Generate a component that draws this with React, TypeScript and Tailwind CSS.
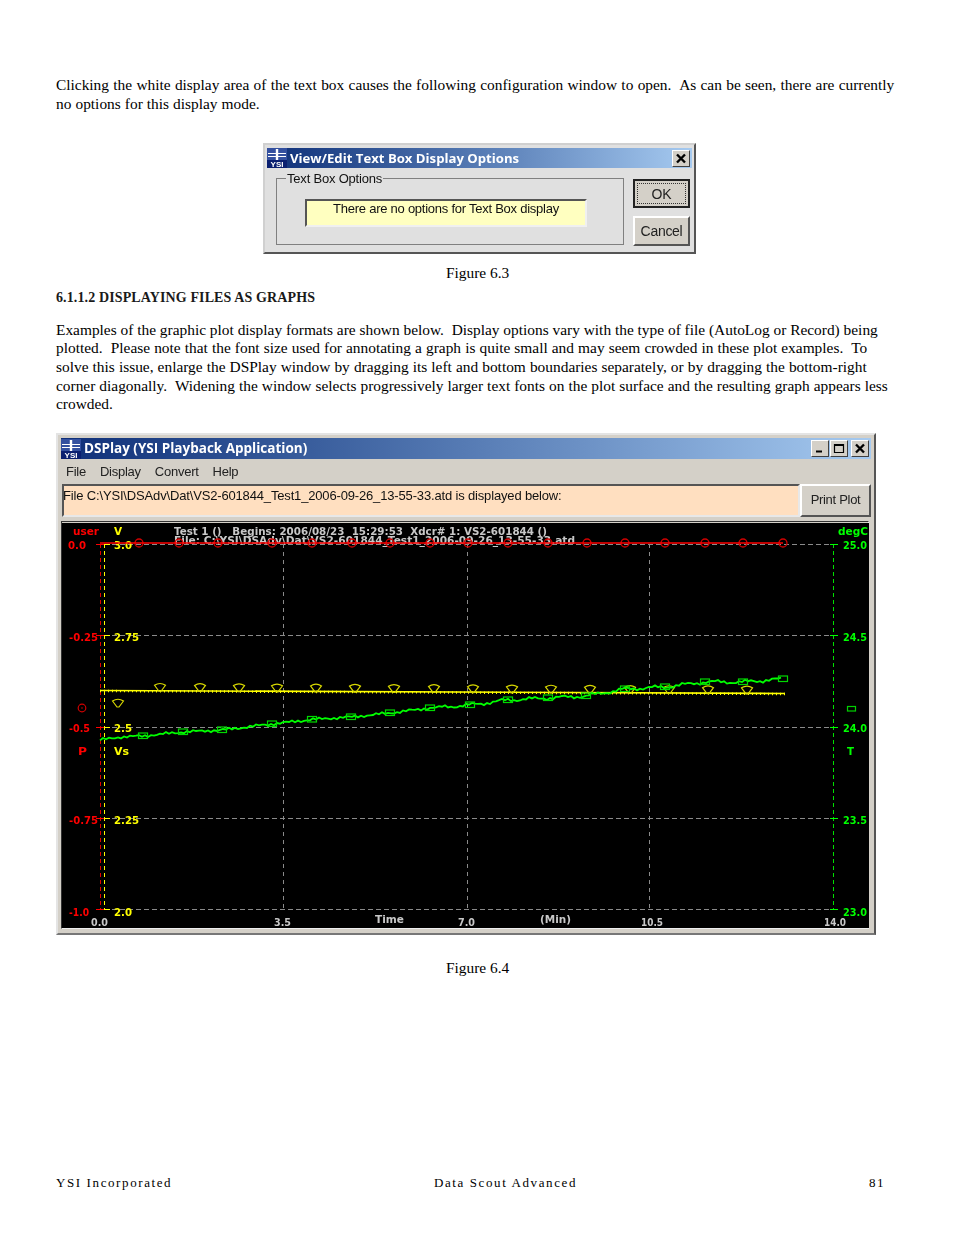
import React from "react";

const serif = "[font-family:'Liberation_Serif',serif]";

const redX = [139, 179, 218, 272, 312, 352, 390, 430, 468, 508, 548, 587, 625, 665, 705, 743, 783];
const yelX = [160, 200, 239, 277, 316, 355, 394, 434, 473, 512, 551, 590, 630, 669, 708, 747];
const grnKeys: [number, number][] = [
  [100, 740], [120, 737], [143, 736], [183, 732], [222, 730], [272, 724], [312, 719.5], [351, 717],
  [390, 713], [430, 708], [470, 705], [508, 700], [548, 698], [586, 696], [625, 689], [665, 687],
  [705, 682], [743, 682], [783, 679],
];
const grnMarks = grnKeys.slice(2);

function greenY(x: number) {
  for (let i = 0; i < grnKeys.length - 1; i++) {
    const [a, b] = grnKeys[i];
    const [c, d] = grnKeys[i + 1];
    if (x >= a && x <= c) return b + ((d - b) * (x - a)) / (c - a);
  }
  return 679;
}
const greenPts: string[] = [];
for (let x = 100; x <= 783; x += 3) {
  const n = Math.sin(x * 0.9) * 0.9 + Math.sin(x * 2.3) * 0.7 * (x > 440 ? 1.8 : 1);
  greenPts.push(`${x},${(greenY(x) + n).toFixed(1)}`);
}

const hY = [544, 635, 727, 818, 909];
const vX = [283, 467, 649];

function T(p: { x: number; y: number; c: string; w?: number; children: string }) {
  return (
    <text
      x={p.x}
      y={p.y}
      fill={p.c}
      fontSize={10.5}
      fontWeight={700}
      fontFamily="'DejaVu Sans', sans-serif"
      textLength={p.w}
      lengthAdjust={p.w ? "spacingAndGlyphs" : undefined}
      xmlSpace="preserve"
    >
      {p.children}
    </text>
  );
}

function Plot() {
  const R = "#ff0000";
  const Y = "#ffff00";
  const G = "#00ff00";
  const W = "#c8c8c8";
  return (
    <svg width={807} height={405} viewBox="62 523 807 405" className="block">
      <rect x={62} y={523} width={807} height={405} fill="#000" />
      <g stroke="#8a8a8a" strokeWidth={1} strokeDasharray="5 3">
        {hY.map((y) => (
          <line key={y} x1={104} x2={833} y1={y + 0.5} y2={y + 0.5} />
        ))}
        {vX.map((x) => (
          <line key={x} x1={x + 0.5} x2={x + 0.5} y1={544} y2={909} strokeDasharray="4 4" />
        ))}
      </g>
      <line x1={100.5} x2={100.5} y1={544} y2={909} stroke="#e00000" strokeDasharray="4 3" />
      <line x1={104.5} x2={104.5} y1={544} y2={909} stroke={Y} strokeDasharray="4 3" />
      <line x1={833.5} x2={833.5} y1={544} y2={909} stroke="#00e000" strokeDasharray="4 3" />
      {hY.map((y) => (
        <g key={y}>
          <line x1={96} x2={105} y1={y + 0.5} y2={y + 0.5} stroke={R} />
          <line x1={104} x2={110} y1={y + 0.5} y2={y + 0.5} stroke={Y} />
          <line x1={830} x2={838} y1={y + 0.5} y2={y + 0.5} stroke={G} />
        </g>
      ))}

      <T x={174} y={535} c={W} w={373}>{"Test 1 ()   Begins: 2006/08/23  15:29:53  Xdcr# 1: VS2-601844 ()"}</T>
      <T x={174} y={544} c={W} w={401}>{"File: C:\\YSI\\DSAdv\\Dat\\VS2-601844_Test1_2006-09-26_13-55-33.atd"}</T>

      <T x={73} y={535} c={R} w={26}>user</T>
      <T x={114} y={535} c={Y}>V</T>
      <T x={838} y={535} c={G} w={30}>degC</T>

      <T x={68} y={549} c={R} w={18}>0.0</T>
      <T x={114} y={549} c={Y} w={18}>3.0</T>
      <T x={69} y={641} c={R} w={29}>-0.25</T>
      <T x={114} y={641} c={Y} w={25}>2.75</T>
      <T x={69} y={732} c={R} w={21}>-0.5</T>
      <T x={114} y={732} c={Y} w={18}>2.5</T>
      <T x={69} y={824} c={R} w={29}>-0.75</T>
      <T x={114} y={824} c={Y} w={25}>2.25</T>
      <T x={69} y={916} c={R} w={20}>-1.0</T>
      <T x={114} y={916} c={Y} w={18}>2.0</T>
      <T x={843} y={549} c={G} w={24}>25.0</T>
      <T x={843} y={641} c={G} w={24}>24.5</T>
      <T x={843} y={732} c={G} w={24}>24.0</T>
      <T x={843} y={824} c={G} w={24}>23.5</T>
      <T x={843} y={916} c={G} w={24}>23.0</T>
      <T x={78} y={755} c={R} w={9}>P</T>
      <T x={114} y={755} c={Y} w={15}>Vs</T>
      <T x={847} y={755} c={G} w={7}>T</T>
      <T x={91} y={926} c={W} w={17}>0.0</T>
      <T x={274} y={926} c={W} w={17}>3.5</T>
      <T x={375} y={923} c={W} w={29}>Time</T>
      <T x={458} y={926} c={W} w={17}>7.0</T>
      <T x={540} y={923} c={W} w={31}>(Min)</T>
      <T x={641} y={926} c={W} w={22}>10.5</T>
      <T x={824} y={926} c={W} w={22}>14.0</T>

      {/* yellow trace */}
      <line x1={100} x2={785} y1={690.5} y2={693.5} stroke={Y} strokeWidth={1.6} />
      <line x1={100} x2={785} y1={691} y2={694} stroke={Y} strokeWidth={2.4} strokeDasharray="1 3" />
      {[...yelX, 118].map((x) => {
        const y = x === 118 ? 700 : 684 + (x - 100) * 0.0044;
        return (
          <path
            key={x}
            d={`M${x - 5.5} ${y + 1} Q${x} ${y - 2.5} ${x + 5.5} ${y + 1} L${x + 1} ${y + 7} L${x - 1} ${y + 7} Z`}
            fill="none"
            stroke="#d8d800"
            strokeWidth={1.2}
          />
        );
      })}

      {/* green trace */}
      <polyline points={greenPts.join(" ")} fill="none" stroke={G} strokeWidth={1.8} />
      {grnMarks.map(([x, y]) => (
        <rect key={x} x={x - 4.5} y={y - 3} width={9} height={5.5} fill="none" stroke="#00d800" strokeWidth={1.2} />
      ))}
      <rect x={847.5} y={706.5} width={8} height={4.5} fill="none" stroke="#00d000" strokeWidth={1.2} />

      {/* red trace */}
      {redX.map((x) => (
        <circle key={x} cx={x} cy={543} r={4} stroke="#d00000" fill="none" strokeWidth={1.3} />
      ))}
      <line x1={100} x2={783} y1={543} y2={543} stroke={R} strokeWidth={1.6} />
      <circle cx={82} cy={708} r={3.8} stroke="#d00000" fill="none" strokeWidth={1.2} />
      <circle cx={82} cy={708} r={0.8} fill="#d00000" />
    </svg>
  );
}

function Logo() {
  return (
    <svg width={20} height={20} viewBox="0 0 20 20" className="shrink-0">
      <rect width={20} height={20} fill="#34509f" />
      <path d="M1 5.5H19M1 8.5H19" stroke="#fff" strokeWidth={1.2} />
      <path d="M10 1V12" stroke="#fff" strokeWidth={2.4} />
      <rect x={0} y={12} width={20} height={8} fill="#0a1f70" />
      <text x={10} y={19} textAnchor="middle" fontSize={8} fontWeight={700} fill="#fff" fontFamily="'Liberation Sans', sans-serif">
        YSI
      </text>
    </svg>
  );
}

function CapBtn({ kind }: { kind: "min" | "max" | "close" }) {
  return (
    <div className="w-[18px] h-[17px] bg-[#d4d0c8] border border-t-white border-l-white border-r-[#404040] border-b-[#404040] flex items-center justify-center">
      <svg width={12} height={11} viewBox="0 0 12 11">
        {kind === "min" && <path d="M2 8.5H8" stroke="#000" strokeWidth={2} />}
        {kind === "max" && <path d="M1.5 1.5H10.5V9.5H1.5Z M1.5 2.5H10.5" stroke="#000" fill="none" strokeWidth={1.2} />}
        {kind === "close" && <path d="M2 1.5L10 9.5M10 1.5L2 9.5" stroke="#000" strokeWidth={2.4} />}
      </svg>
    </div>
  );
}

const ui = "[font-family:'Liberation_Sans',sans-serif]";
const title = "[font-family:'Open_Sans',sans-serif]";

export default function App() {
  return (
    <div className={`w-[954px] h-[1235px] bg-white text-black flex flex-col pl-[56px] pt-[76px] ${serif} text-[15.4px] leading-[18.67px] whitespace-pre`}>
      <div>
        <p className="[word-spacing:0.45px]">Clicking the white display area of the text box causes the following configuration window to open.  As can be seen, there are currently</p>
        <p className="[word-spacing:0.2px]">no options for this display mode.</p>
      </div>

      {/* Figure 6.3 dialog */}
      <div className="mt-[30px] ml-[207px] w-[433px] h-[111px] bg-[#e0e0e0] border-2 border-t-[#d0d0d0] border-l-[#d0d0d0] border-r-[#555] border-b-[#555] p-[2px] pt-[3px] flex flex-col blur-[0.35px]">
        <div className="h-[20px] bg-gradient-to-r from-[#0f2f78] to-[#a6caf0] flex items-center shrink-0">
          <Logo />
          <span className={`${title} ml-[3px] font-bold text-white text-[13.15px] leading-none`}>View/Edit Text Box Display Options</span>
          <div className="ml-auto mr-[2px]">
            <CapBtn kind="close" />
          </div>
        </div>
        <div className="flex flex-1 pl-[9px]">
          <fieldset className="mt-[3px] w-[348px] h-[74px] border border-[#808080] pl-[28px] shrink-0">
            <legend className={`${ui} -ml-[19px] px-[1px] text-[13px] tracking-[-0.2px] leading-[15px] text-[#111]`}>Text Box Options</legend>
            <div className={`${ui} mt-[13px] w-[282px] h-[28px] bg-[#ffffc0] border-2 border-t-[#555] border-l-[#555] border-r-[#f0f0f0] border-b-[#f0f0f0] text-center text-[13px] tracking-[-0.25px] leading-[16px] text-[#111]`}>
              There are no options for Text Box display
            </div>
          </fieldset>
          <div className="ml-[9px] mt-[11px] flex flex-col">
            <div className="w-[57px] h-[29px] bg-[#d4d0c8] border-2 border-[#222] p-[2px] flex">
              <div className={`${ui} flex-1 border border-dotted border-[#333] flex items-center justify-center text-[14px] text-[#222]`}>OK</div>
            </div>
            <div className={`${ui} mt-[8px] w-[57px] h-[30px] bg-[#d4d0c8] border-2 border-t-white border-l-white border-r-[#555] border-b-[#555] flex items-center justify-center text-[14px] tracking-[-0.3px] text-[#222]`}>Cancel</div>
          </div>
        </div>
      </div>

      <p className="mt-[10px] ml-[390px]">Figure 6.3</p>
      <h2 className="mt-[6px] text-[14px] tracking-[0.12px] font-bold text-[#1a1a1a]">6.1.1.2 DISPLAYING FILES AS GRAPHS</h2>
      <div className="mt-[13px]">
        <p>Examples of the graphic plot display formats are shown below.  Display options vary with the type of file (AutoLog or Record) being</p>
        <p className="[word-spacing:0.24px]">plotted.  Please note that the font size used for annotating a graph is quite small and may seem crowded in these plot examples.  To</p>
        <p className="[word-spacing:0.24px]">solve this issue, enlarge the DSPlay window by dragging its left and bottom boundaries separately, or by dragging the bottom-right</p>
        <p className="[word-spacing:0.18px]">corner diagonally.  Widening the window selects progressively larger text fonts on the plot surface and the resulting graph appears less</p>
        <p>crowded.</p>
      </div>

      {/* Figure 6.4 window */}
      <div className="mt-[19px] w-[820px] h-[502px] bg-[#d4d0c8] border-2 border-t-[#e4e4e4] border-l-[#e4e4e4] border-r-[#555] border-b-[#777] p-[3px] flex flex-col blur-[0.35px]">
        <div className="h-[21px] bg-gradient-to-r from-[#0f2f78] to-[#a6caf0] flex items-center shrink-0">
          <Logo />
          <span className={`${title} ml-[3px] font-bold text-white text-[13.5px] leading-none`}>DSPlay (YSI Playback Application)</span>
          <div className="ml-auto mr-[2px] flex gap-[1px]">
            <CapBtn kind="min" />
            <CapBtn kind="max" />
            <div className="ml-[2px]">
              <CapBtn kind="close" />
            </div>
          </div>
        </div>
        <div className={`${ui} h-[25px] flex items-center pt-[1px] pl-[5px] gap-[14px] text-[13px] tracking-[-0.25px] text-[#222] shrink-0`}>
          <span>File</span>
          <span>Display</span>
          <span>Convert</span>
          <span>Help</span>
        </div>
        <div className="h-[33px] flex shrink-0 pl-[1px]">
          <div className={`${ui} w-[738px] h-full bg-[#ffdfc0] border-2 border-t-[#555] border-l-[#555] border-r-[#e8e8e8] border-b-[#e8e8e8] pt-[1px] indent-[-1px] text-[13px] tracking-[-0.16px] leading-[18px] text-[#111]`}>
            {"File C:\\YSI\\DSAdv\\Dat\\VS2-601844_Test1_2006-09-26_13-55-33.atd is displayed below:"}
          </div>
          <div className={`${ui} flex-1 border-2 border-t-white border-l-white border-r-[#555] border-b-[#555] flex items-center justify-center text-[13px] tracking-[-0.3px] text-[#222]`}>Print Plot</div>
        </div>
        <div className="mt-[4px] w-[808px] h-[408px] border border-t-[#333] border-l-[#333] border-r-[#eee] border-b-[#eee] pt-[1px]">
          <Plot />
        </div>
      </div>

      <p className="mt-[24px] ml-[390px]">Figure 6.4</p>

      <div className="mt-auto mb-[43px] flex text-[13px] leading-[18px] tracking-[1.6px]">
        <span className="w-[378px]">YSI Incorporated</span>
        <span className="w-[435px]">Data Scout Advanced</span>
        <span>81</span>
      </div>
    </div>
  );
}
